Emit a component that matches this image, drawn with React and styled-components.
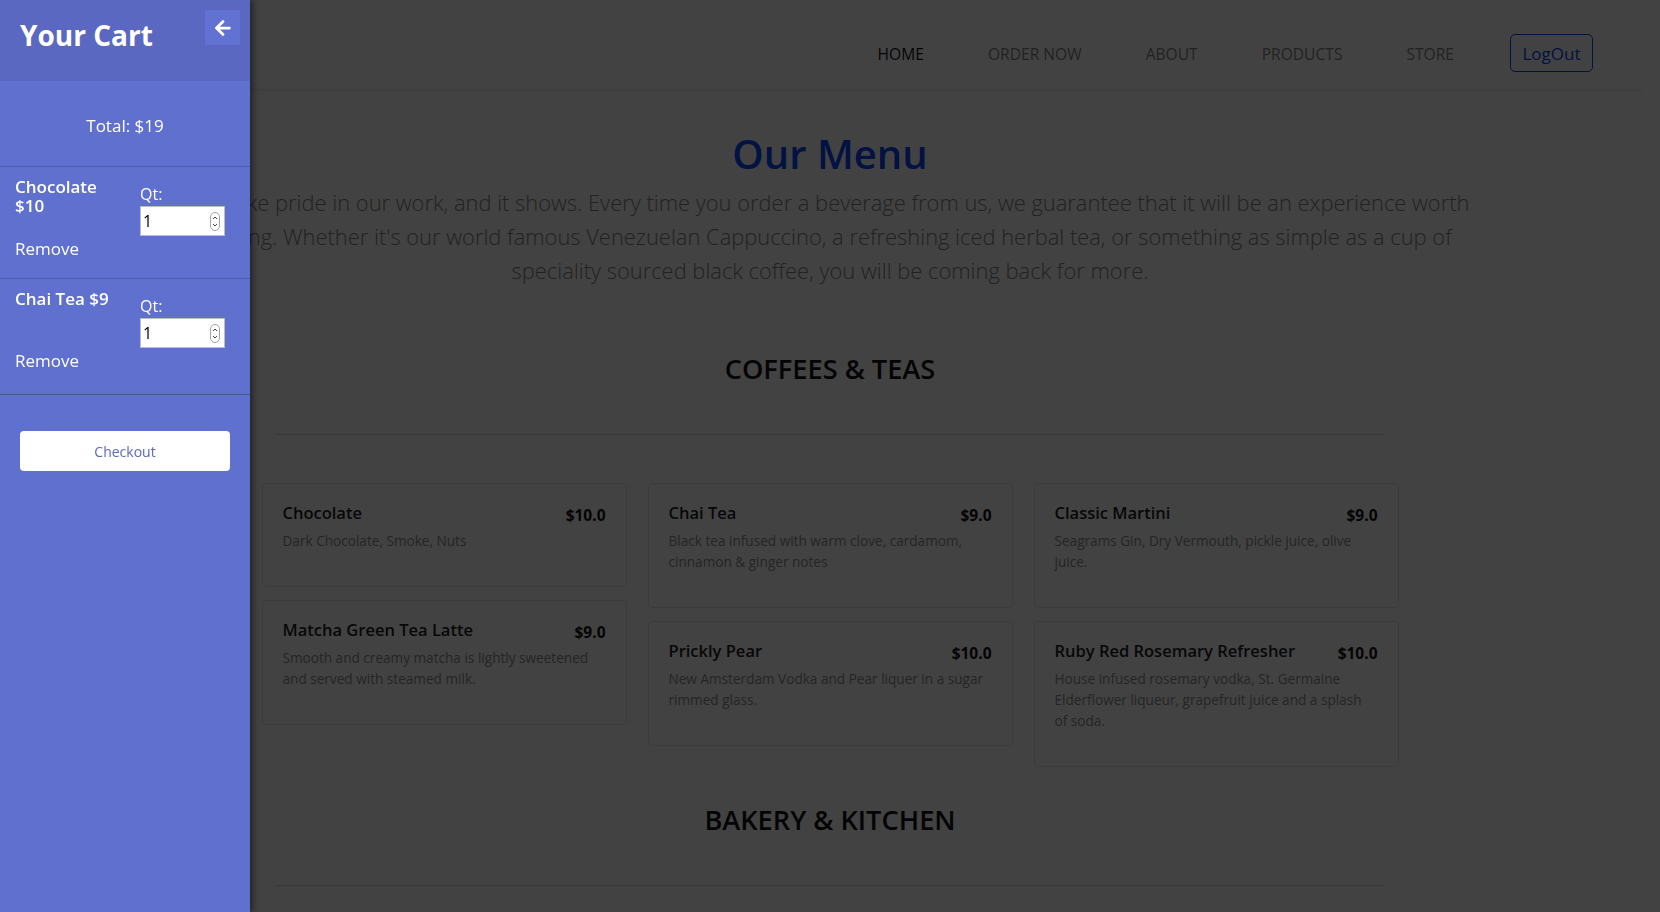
import React from 'react';
import styled, { createGlobalStyle } from 'styled-components';
import { ArrowLeft } from 'lucide-react';

const GlobalStyle = createGlobalStyle`
  * { box-sizing: border-box; }
  body {
    margin: 0;
    background: #fff;
    font-family: "Open Sans", "Noto Sans", sans-serif;
    overflow: hidden;
  }
`;

const BLUE = '#0a45ff';

const Page = styled.div`
  min-height: 100vh;
  background: #fff;
`;

const NavBar = styled.nav`
  margin: 0 18px;
  height: 90px;
  padding: 19px 49px 0 0;
  display: flex;
  justify-content: flex-end;
  align-items: center;
  border-bottom: 1px solid #ececec;
  box-shadow: 0 2px 5px rgba(0, 0, 0, 0.06);
`;

const NavLink = styled.a`
  padding: 0 32px;
  font-size: 15.6px;
  color: ${p => (p.$active ? '#111' : '#858585')};
  text-decoration: none;
  cursor: pointer;
`;

const LogOutButton = styled.button`
  margin: -2px 0 0 24px;
  width: 83px;
  height: 38px;
  background: transparent;
  border: 1.5px solid ${BLUE};
  border-radius: 5px;
  color: ${BLUE};
  font-family: inherit;
  font-size: 17px;
  cursor: pointer;
`;

const Main = styled.main`
  display: flex;
  flex-direction: column;
  align-items: center;
  padding-top: 40px;
`;

const Title = styled.h1`
  margin: 0;
  font-size: 40px;
  line-height: 48px;
  font-weight: 600;
  color: ${BLUE};
`;

const Intro = styled.p`
  margin: 8px 0 0;
  max-width: 1300px;
  text-align: center;
  font-size: 21.9px;
  font-weight: 300;
  line-height: 34px;
  color: #848484;
`;

const Section = styled.section`
  display: flex;
  flex-direction: column;
  align-items: center;
  margin-top: ${p => p.$gap}px;
`;

const SectionTitle = styled.h2`
  margin: 0;
  font-size: 27.2px;
  line-height: 40px;
  font-weight: 600;
  color: #111;
`;

const Divider = styled.hr`
  width: 1110px;
  margin: 45px 0 48px;
  border: none;
  border-top: 1px solid #dcdcdc;
`;

const CardGrid = styled.div`
  display: grid;
  grid-template-columns: repeat(3, 365px);
  gap: 21px;
  align-items: start;
`;

const CardColumn = styled.div`
  display: flex;
  flex-direction: column;
  gap: 13px;
`;

const Card = styled.div`
  border: 1px solid #e4e4e4;
  border-radius: 4px;
  padding: 16px 20px 35px;
`;

const CardHead = styled.div`
  display: flex;
  justify-content: space-between;
  align-items: center;
  gap: 12px;
`;

const CardName = styled.h3`
  margin: 0;
  font-size: 16.5px;
  line-height: 26px;
  font-weight: 600;
  color: #1e1e1e;
`;

const CardPrice = styled.span`
  padding-top: 3px;
  font-size: 15.5px;
  font-weight: 700;
  color: #111;
`;

const CardDesc = styled.p`
  margin: 4px 0 0;
  font-size: 13.6px;
  line-height: 21px;
  color: #8f8f8f;
`;

const Overlay = styled.div`
  position: fixed;
  inset: 0;
  background: rgba(0, 0, 0, 0.74);
  z-index: 10;
`;

const Drawer = styled.aside`
  position: fixed;
  top: 0;
  left: 0;
  bottom: 0;
  width: 250px;
  background: #6070ce;
  color: #fff;
  z-index: 20;
  box-shadow: 3px 0 6px rgba(0, 0, 0, 0.45);
  display: flex;
  flex-direction: column;
`;

const DrawerHeader = styled.header`
  height: 81px;
  padding: 10px 10px 0 20px;
  background: #5b68c1;
  display: flex;
  justify-content: space-between;
  align-items: flex-start;
`;

const DrawerTitle = styled.h2`
  margin: 4px 0 0;
  font-size: 28px;
  line-height: 42px;
  font-weight: 700;
`;

const CloseButton = styled.button`
  width: 35px;
  height: 35px;
  padding: 0;
  border: none;
  background: #6272d2;
  color: #fff;
  display: flex;
  align-items: center;
  justify-content: center;
  cursor: pointer;
`;

const Total = styled.div`
  padding: 32px 0 27px;
  text-align: center;
  font-size: 17px;
  line-height: 26px;
  border-bottom: 1px solid #4f5cb3;
`;

const CartList = styled.div`
  padding-bottom: 4px;
  border-bottom: 1px solid #42598a;
`;

const CartItem = styled.div`
  padding: 10px 25px 19px 15px;

  & + & {
    border-top: 1px solid #4f5cb3;
  }
`;

const ItemTop = styled.div`
  display: flex;
  justify-content: space-between;
  align-items: flex-start;
`;

const ItemName = styled.div`
  width: 108px;
  font-size: 17px;
  line-height: 19px;
  font-weight: 600;
`;

const QtyBox = styled.label`
  margin-top: 7px;
  width: 85px;
  display: flex;
  flex-direction: column;
  gap: 2px;
  font-size: 16px;
  line-height: 20px;
`;

const QtyField = styled.div`
  position: relative;
  width: 85px;
  height: 30px;
`;

const QtyInput = styled.input`
  width: 100%;
  height: 100%;
  padding: 0 18px 0 2px;
  border: 1px solid #bdbdbd;
  background: #fff;
  color: #000;
  font-family: inherit;
  font-size: 16px;
  outline: none;
  appearance: textfield;

  &::-webkit-inner-spin-button,
  &::-webkit-outer-spin-button {
    -webkit-appearance: none;
    margin: 0;
  }
`;

const Spinner = styled.svg`
  position: absolute;
  right: 5px;
  top: 6px;
  pointer-events: none;
`;

const RemoveButton = styled.button`
  display: block;
  margin-top: 3px;
  padding: 0;
  border: none;
  background: none;
  color: #fff;
  font-family: inherit;
  font-size: 17px;
  line-height: 20px;
  font-weight: 500;
  cursor: pointer;
`;

const CheckoutButton = styled.button`
  margin: 36px 20px 0;
  height: 40px;
  border: none;
  border-radius: 4px;
  background: #fff;
  color: #5b68c6;
  font-family: inherit;
  font-size: 14px;
  cursor: pointer;
`;

const navItems = ['HOME', 'ORDER NOW', 'ABOUT', 'PRODUCTS', 'STORE'];

const coffees = [
  [
    { name: 'Chocolate', price: '$10.0', desc: 'Dark Chocolate, Smoke, Nuts' },
    { name: 'Matcha Green Tea Latte', price: '$9.0', desc: 'Smooth and creamy matcha is lightly sweetened and served with steamed milk.' },
  ],
  [
    { name: 'Chai Tea', price: '$9.0', desc: 'Black tea infused with warm clove, cardamom, cinnamon & ginger notes' },
    { name: 'Prickly Pear', price: '$10.0', desc: 'New Amsterdam Vodka and Pear liquer in a sugar rimmed glass.' },
  ],
  [
    { name: 'Classic Martini', price: '$9.0', desc: 'Seagrams Gin, Dry Vermouth, pickle juice, olive juice.' },
    { name: 'Ruby Red Rosemary Refresher', price: '$10.0', desc: 'House infused rosemary vodka, St. Germaine Elderflower liqueur, grapefruit juice and a splash of soda.' },
  ],
];

const cart = [
  { name: 'Chocolate', price: 10, qty: 1 },
  { name: 'Chai Tea', price: 9, qty: 1 },
];

function MenuSection({ title, columns, gap }) {
  return (
    <Section $gap={gap}>
      <SectionTitle>{title}</SectionTitle>
      <Divider />
      <CardGrid>
        {columns.map((col, i) => (
          <CardColumn key={i}>
            {col.map(item => (
              <Card key={item.name}>
                <CardHead>
                  <CardName>{item.name}</CardName>
                  <CardPrice>{item.price}</CardPrice>
                </CardHead>
                <CardDesc>{item.desc}</CardDesc>
              </Card>
            ))}
          </CardColumn>
        ))}
      </CardGrid>
    </Section>
  );
}

function QtyStepper({ value }) {
  return (
    <QtyField>
      <QtyInput type="number" min="1" defaultValue={value} />
      <Spinner width="10" height="19" viewBox="0 0 10 19">
        <rect x="0.5" y="0.5" width="9" height="18" rx="4.5" fill="#fff" stroke="#a3a3a3" />
        <path d="M3 7 5 5 7 7" fill="none" stroke="#444" strokeWidth="1" />
        <path d="M3 12 5 14 7 12" fill="none" stroke="#444" strokeWidth="1" />
      </Spinner>
    </QtyField>
  );
}

export default function App() {
  const total = cart.reduce((sum, item) => sum + item.price * item.qty, 0);

  return (
    <>
      <GlobalStyle />
      <Page>
        <NavBar>
          {navItems.map((item, i) => (
            <NavLink key={item} $active={i === 0}>{item}</NavLink>
          ))}
          <LogOutButton>LogOut</LogOutButton>
        </NavBar>
        <Main>
          <Title>Our Menu</Title>
          <Intro>
            We take pride in our work, and it shows. Every time you order a beverage from us, we guarantee that it will be an experience worth having. Whether it's our world famous Venezuelan Cappuccino, a refreshing iced herbal tea, or something as simple as a cup of speciality sourced black coffee, you will be coming back for more.
          </Intro>
          <MenuSection title="COFFEES & TEAS" columns={coffees} gap={61} />
          <MenuSection title="BAKERY & KITCHEN" columns={[]} gap={33} />
        </Main>
      </Page>

      <Overlay />

      <Drawer>
        <DrawerHeader>
          <DrawerTitle>Your Cart</DrawerTitle>
          <CloseButton aria-label="Close cart">
            <ArrowLeft size={22} strokeWidth={3} />
          </CloseButton>
        </DrawerHeader>
        <Total>{`Total: $${total}`}</Total>
        <CartList>
          {cart.map(item => (
            <CartItem key={item.name}>
              <ItemTop>
                <ItemName>{`${item.name} $${item.price}`}</ItemName>
                <QtyBox>
                  Qt:
                  <QtyStepper value={item.qty} />
                </QtyBox>
              </ItemTop>
              <RemoveButton>Remove</RemoveButton>
            </CartItem>
          ))}
        </CartList>
        <CheckoutButton>Checkout</CheckoutButton>
      </Drawer>
    </>
  );
}
